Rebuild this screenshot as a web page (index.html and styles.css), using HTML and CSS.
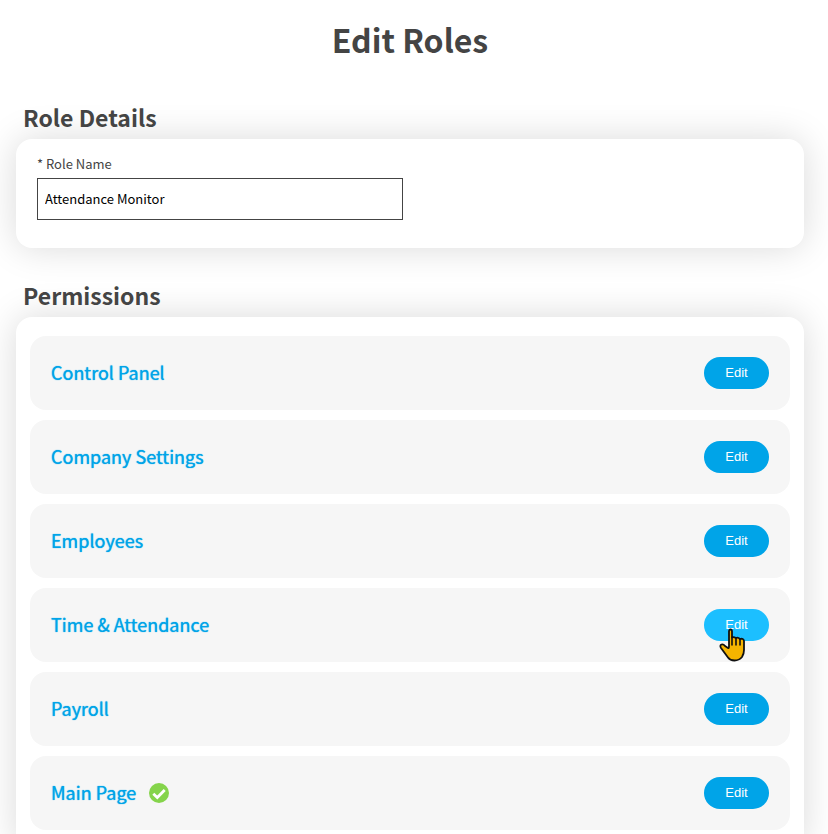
FILE: index.html
```html
<!DOCTYPE html>
<html lang="en">
<head>
  <meta charset="UTF-8">
  <meta name="viewport" content="width=device-width, initial-scale=1.0">
  <title>Edit Roles</title>
  <link rel="stylesheet" href="styles.css">
</head>
<body>
  <main class="page">
    <h1 class="page-title">Edit Roles</h1>

    <section class="section">
      <h2 class="section-title">Role Details</h2>
      <div class="card details">
        <label class="field-label" for="role-name">* Role Name</label>
        <input class="field-input" type="text" id="role-name" value="Attendance Monitor">
      </div>
    </section>

    <section class="section">
      <h2 class="section-title">Permissions</h2>
      <ul class="card permissions">
        <li class="permission">
          <h3 class="permission-name">Control Panel</h3>
          <button type="button" class="btn">Edit</button>
        </li>
        <li class="permission">
          <h3 class="permission-name">Company Settings</h3>
          <button type="button" class="btn">Edit</button>
        </li>
        <li class="permission">
          <h3 class="permission-name">Employees</h3>
          <button type="button" class="btn">Edit</button>
        </li>
        <li class="permission">
          <h3 class="permission-name">Time &amp; Attendance</h3>
          <div class="btn-wrap">
            <button type="button" class="btn active">Edit</button>
            <svg class="pointer" width="27" height="34" viewBox="0 0 27 34" aria-hidden="true">
              <path d="M10 18V3.5Q10 1.500 11.500 1.500T13 3.500V9.500Q14.500 8.500 17 10Q19 9 21 11Q24.500 10 25 13V22Q25 26 23 29Q20 32.500 15.500 32.500Q11 32.500 9 29.500L2 20Q0.500 17.500 2.500 16.500Q4.500 16 6 18L9 20Q10 20.500 10 18Z" fill="#f5b400" stroke="#111" stroke-width="1.800" stroke-linejoin="round"/>
              <path d="M13 9V17M17 10V17M21 11V17" fill="none" stroke="#111" stroke-width="1.600" stroke-linecap="round"/>
            </svg>
          </div>
        </li>
        <li class="permission">
          <h3 class="permission-name">Payroll</h3>
          <button type="button" class="btn">Edit</button>
        </li>
        <li class="permission">
          <h3 class="permission-name">Main Page</h3>
          <svg class="check" width="20" height="20" viewBox="0 0 20 20" role="img" aria-label="Enabled">
            <circle cx="10" cy="10" r="10" fill="#85d44b"/>
            <path d="M4.300 10.700L8.300 14.500L15.700 7" fill="none" stroke="#fff" stroke-width="2.800"/>
          </svg>
          <button type="button" class="btn">Edit</button>
        </li>
      </ul>
    </section>
  </main>
</body>
</html>
```

FILE: styles.css
```css
:root {
  --primary: #00a4e8;
  --primary-hover: #1cbfff;
  --text: #444;
  --row: #f6f6f6;
  --white: #fff;
}
* { box-sizing: border-box; }
body { font-family: 'Noto Sans CJK SC', 'Noto Sans', sans-serif; background: var(--white); color: var(--text); margin: 0; }
.page { padding: 15px 24px 0 16px; }
.page-title { margin: 0 0 38px; font-size: 32px; line-height: 48px; font-weight: 700; text-align: center; }
.section { margin-bottom: 31px; }
.section:last-child { margin-bottom: 0; }
.section-title { margin: 0; padding: 0 7px 6px; font-size: 23px; line-height: 32px; font-weight: 700; }
.card { background: var(--white); border-radius: 16px; box-shadow: 0 0 36px rgba(0,0,0,0.15); }
.details { display: flex; flex-direction: column; align-items: flex-start; padding: 15px 21px 28px; }
.field-label { font-size: 13px; line-height: 20px; margin-bottom: 4px; }
.field-input { width: 49%; height: 42px; padding: 0 7px 2px; border: 1px solid var(--text); background: var(--white); color: #000; font-family: inherit; font-size: 13px; outline: none; }
.permissions { display: flex; flex-direction: column; gap: 10px; margin: 0; padding: 19px 14px; list-style: none; }
.permission { display: flex; align-items: center; gap: 13px; padding: 21px; background: var(--row); border-radius: 16px; }
.permission-name { margin: 0; padding-bottom: 3px; font-size: 18px; line-height: 28px; font-weight: 400; color: var(--primary); text-shadow: 0 0 1px var(--primary); }
.btn { min-width: 65px; height: 32px; margin-left: auto; padding: 0 16px 2px; border: none; border-radius: 16px; background: var(--primary); color: var(--white); font-family: 'Liberation Sans', Arial, sans-serif; font-size: 13px; cursor: pointer; }
.btn:hover, .btn.active { background: var(--primary-hover); }
.btn-wrap { position: relative; margin-left: auto; }
.pointer { position: absolute; top: 19px; left: 15px; pointer-events: none; }
```
